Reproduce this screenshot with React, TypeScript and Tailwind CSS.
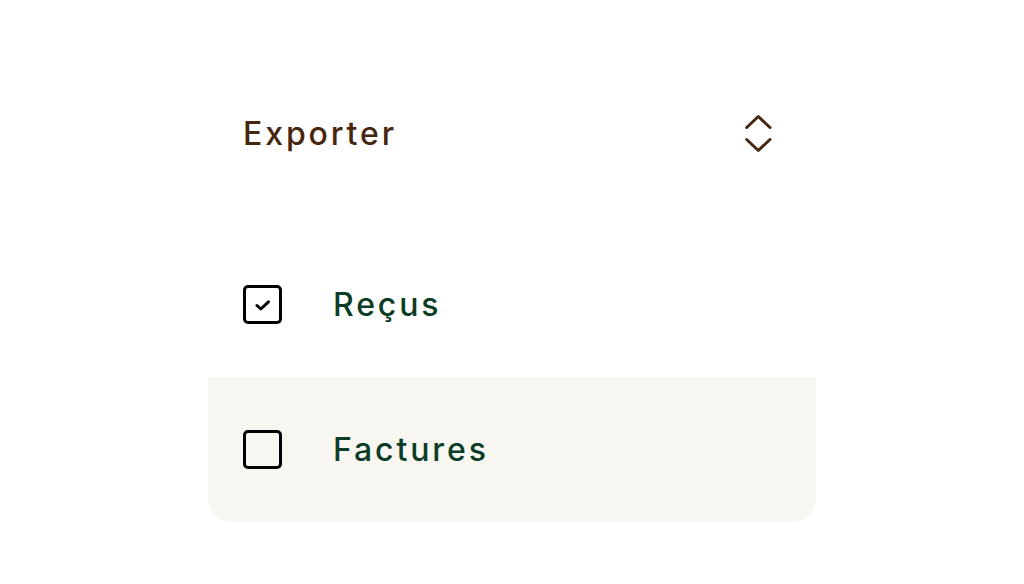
import React from "react";

export default function App() {
  return (
    <div className="min-h-[584px] w-[1024px] bg-white" style={{ fontFamily: "Inter, 'Noto Sans', sans-serif" }}>
      <div className="ml-[208px] w-[608px] pt-[62px]">
        <div className="flex h-[144px] items-center justify-between pl-[35px] pr-[45px]">
          <span className="text-[32px] font-medium leading-none tracking-[0.09em] text-[#47260f]">Exporter</span>
          <svg width="30" height="42" viewBox="0 0 30 42" fill="none" stroke="#47260f" strokeWidth="3" strokeLinecap="round" strokeLinejoin="round" className="mr-[-2px]">
            <path d="M3.7 14.5 L15.3 3.5 L27 14.5" />
            <path d="M3.7 26.5 L15.3 37.5 L27 26.5" />
          </svg>
        </div>
        <div className="mt-[26px] flex flex-col">
          <div className="flex h-[145px] items-center pl-[35px]">
            <div className="flex h-[39px] w-[39px] items-center justify-center rounded-[5px] border-[3px] border-black">
              <svg width="16" height="12" viewBox="0 0 16 12" fill="none" stroke="black" strokeWidth="3" strokeLinecap="round" strokeLinejoin="round">
                <path d="M2 6.5 L5.8 10 L13.5 2.8" />
              </svg>
            </div>
            <span className="ml-[51px] text-[32px] font-medium leading-none tracking-[0.09em] text-[#0b3d26]">Reçus</span>
          </div>
          <div className="flex h-[145px] items-center rounded-b-[24px] bg-[#f7f6f1] pl-[35px]">
            <div className="h-[39px] w-[39px] rounded-[5px] border-[3px] border-black" />
            <span className="ml-[51px] text-[32px] font-medium leading-none tracking-[0.09em] text-[#0b3d26]">Factures</span>
          </div>
        </div>
      </div>
    </div>
  );
}
